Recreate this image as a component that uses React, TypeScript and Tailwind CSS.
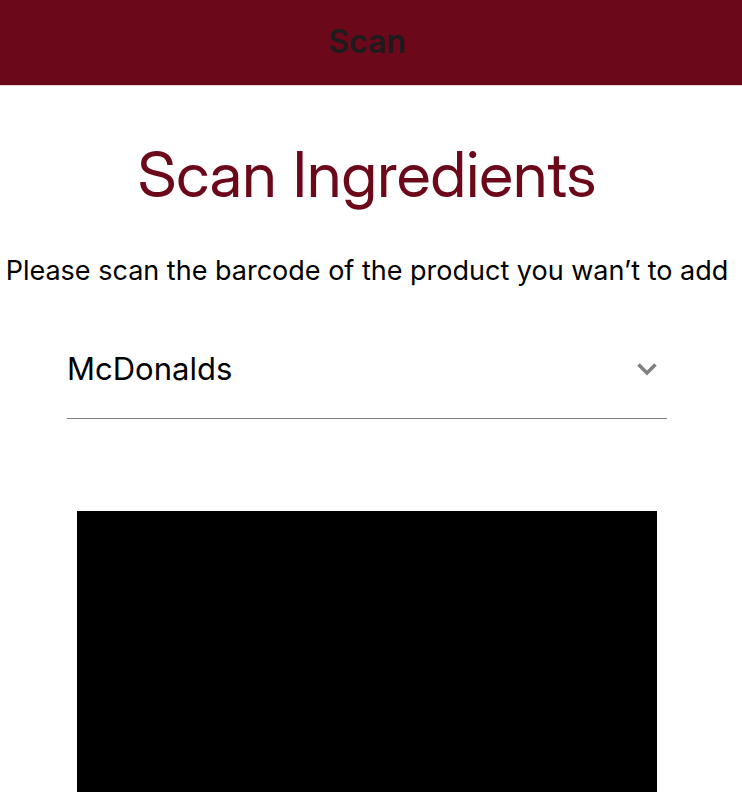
export default function App() {
  return (
    <div className="bg-white font-[Inter,sans-serif] text-black">
      <header className="flex h-[86px] items-center justify-center border-b border-[#e9d5d9] bg-[#6b0819] pr-2 pb-0.5">
        <h2 className="text-[32px] leading-10 font-semibold text-[#1c1c1e]">Scan</h2>
      </header>
      <main className="flex flex-col items-center pr-2">
        <h1 className="mt-12 text-center font-['Inter_Display',Inter,sans-serif] text-[63px] leading-20 text-[#6b0819]">
          Scan Ingredients
        </h1>
        <p className="mt-[37px] text-[27px] leading-10 whitespace-nowrap">
          Please scan the barcode of the product you wan’t to add
        </p>
        <div className="relative mt-[27px] w-[600px] max-w-full border-b border-[#808080]">
          <select
            aria-label="Restaurant"
            defaultValue="McDonalds"
            className="block h-[100px] w-full appearance-none bg-transparent pt-0.5 text-[31px] leading-10 outline-none"
          >
            <option>McDonalds</option>
          </select>
          <svg
            viewBox="0 0 20 13"
            className="pointer-events-none absolute top-[45px] right-[10px] h-[13px] w-5 fill-none stroke-[#808080]"
            strokeWidth="3.500"
            aria-hidden="true"
          >
            <path d="M1.500 1.500 10 10l8.500-8.500" />
          </svg>
        </div>
        <div className="mt-23 h-[281px] w-[580px] max-w-full bg-black" />
      </main>
    </div>
  );
}
